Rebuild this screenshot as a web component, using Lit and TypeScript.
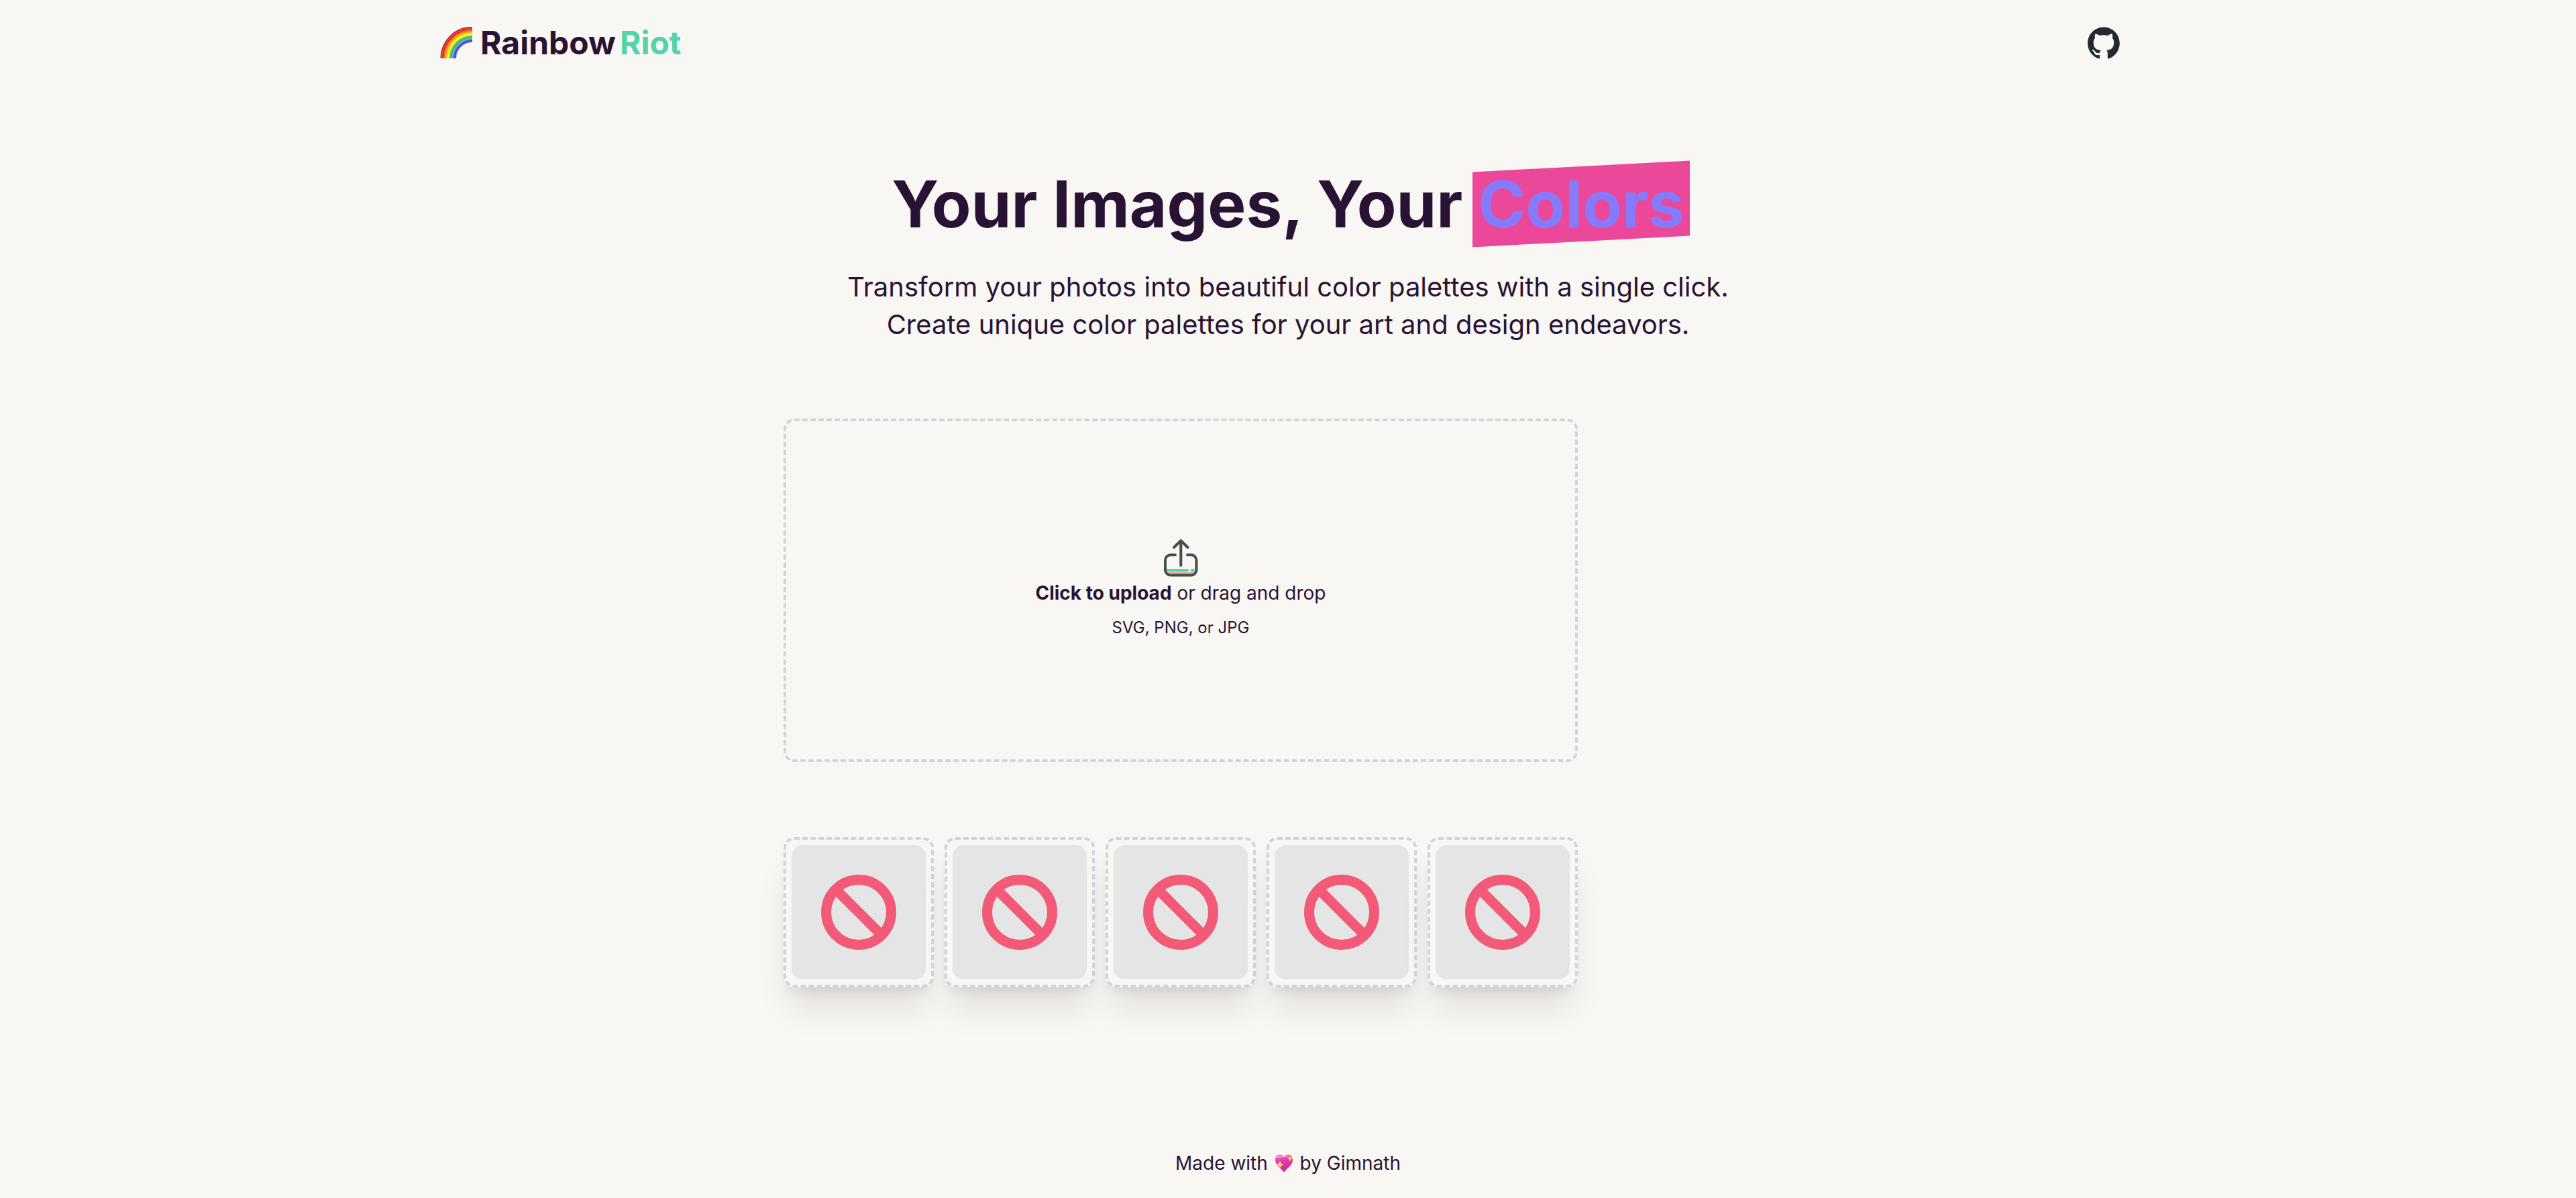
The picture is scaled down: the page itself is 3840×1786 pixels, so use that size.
import { LitElement, html, css, svg } from "lit";
import { customElement, property, state } from "lit/decorators.js";

@customElement("rainbow-mark")
class RainbowMark extends LitElement {
  static styles = css`
    :host {
      display: block;
      width: 48px;
      height: 48px;
    }
    .art {
      display: block;
      width: 100%;
      height: 100%;
    }
  `;

  // Outer radius and colour of each band, from the outside in.
  private bands: [number, string][] = [
    [47.5, "#c8142a"],
    [46, "#e0565e"],
    [44.5, "#d3221c"],
    [43, "#f2701b"],
    [41, "#fa9c12"],
    [39, "#fdc81a"],
    [37.5, "#fff05e"],
    [35.5, "#cdea3c"],
    [34, "#6fd02c"],
    [32, "#3fb53a"],
    [30.5, "#5ab8ee"],
    [28.5, "#3f78ee"],
    [27, "#5430d4"],
    [25.5, "#8a58ee"],
  ];

  render() {
    return html`<svg class="art" viewBox="0 0 48 48" role="img" aria-label="Rainbow">
      ${this.bands.map(
        ([r, color]) => svg`<path d="M${48 - r} 47A${r} ${r} 0 0 1 48 ${47 - r}V47Z" fill=${color} />`
      )}
      <path d="M24 47A24 24 0 0 1 48 23V48H24Z" fill="#f9f7f3" />
    </svg>`;
  }
}

@customElement("heart-mark")
class HeartMark extends LitElement {
  static styles = css`
    :host {
      display: inline-block;
      width: 28px;
      height: 28px;
      margin: 0 2px;
      vertical-align: -4px;
    }
    .art {
      display: block;
      width: 100%;
      height: 100%;
    }
  `;

  render() {
    return html`<svg class="art" viewBox="0 0 28 28" role="img" aria-label="Sparkling heart">
      <defs>
        <linearGradient id="body" x1="0" y1="0" x2="0.3" y2="1">
          <stop offset="0" stop-color="#ee6cca" />
          <stop offset="0.4" stop-color="#e43cb4" />
          <stop offset="1" stop-color="#d8249e" />
        </linearGradient>
      </defs>
      <path
        d="M14 27.500C10 22 1 17.500 1 9C1 4.500 4 1.500 7.800 1.500C10.700 1.500 13 3 14 5.300C15 3 17.300 1.500 20.200 1.500C24 1.500 27 4.500 27 9C27 17.500 18 22 14 27.500Z"
        fill="url(#body)"
      />
      <path
        d="M2.500 7.500C3 4.500 5.200 2.800 7.800 2.800C10.300 2.800 12 4 12.800 6C10 5.200 5 5.500 2.500 7.500ZM15.200 6C16 4 17.800 2.800 20 2.800C21 2.800 22 3.100 22.800 3.600C20.500 4.500 18 5.300 15.200 6Z"
        fill="#f7a6dd"
      />
      <path d="M23 2.500L24.300 5.700L27.500 7L24.300 8.300L23 11.500L21.700 8.300L18.500 7L21.700 5.700Z" fill="#fdd94a" />
      <path d="M8 10.500L9.600 14.600L13.500 16.300L9.600 18L8 22L6.400 18L2.300 16.300L6.400 14.600Z" fill="#fde05a" />
    </svg>`;
  }
}

@customElement("site-header")
class SiteHeader extends LitElement {
  static styles = css`
    :host {
      display: block;
    }
    .bar {
      display: flex;
      align-items: center;
      justify-content: space-between;
      box-sizing: border-box;
      max-width: 2560px;
      height: 128px;
      margin: 0 auto;
      padding: 0 40px 0 16px;
    }
    .brand {
      display: flex;
      align-items: center;
      gap: 12px;
      color: inherit;
      font-size: 48px;
      font-weight: 700;
      line-height: 64px;
      text-decoration: none;
    }
    .name {
      display: flex;
      gap: 6px;
    }
    .accent {
      color: #54d3a8;
    }
    .github {
      display: block;
      color: #24292f;
    }
    .mark {
      display: block;
      width: 48px;
      height: 48px;
    }
  `;

  render() {
    return html`<header class="bar">
      <a class="brand" href="/">
        <rainbow-mark></rainbow-mark>
        <span class="name"><span>Rainbow</span> <span class="accent">Riot</span></span>
      </a>
      <a class="github" href="https://github.com" aria-label="GitHub">
        <svg class="mark" viewBox="0 0 98 96" aria-hidden="true">
          <path
            fill="currentColor"
            fill-rule="evenodd"
            clip-rule="evenodd"
            d="M48.854 0C21.839 0 0 22 0 49.217c0 21.756 13.993 40.172 33.405 46.690 2.427.490 3.316-1.059 3.316-2.362 0-1.141-.080-5.052-.080-9.127-13.590 2.934-16.420-5.867-16.420-5.867-2.184-5.704-5.420-7.170-5.420-7.170-4.448-3.015.324-3.015.324-3.015 4.934.326 7.523 5.052 7.523 5.052 4.367 7.496 11.404 5.378 14.235 4.074.404-3.178 1.699-5.378 3.074-6.600-10.839-1.141-22.243-5.378-22.243-24.283 0-5.378 1.940-9.778 5.014-13.200-.485-1.222-2.184-6.275.486-13.038 0 0 4.125-1.304 13.426 5.052a46.970 46.970 0 0 1 12.214-1.630c4.125 0 8.330.571 12.213 1.630 9.302-6.356 13.427-5.052 13.427-5.052 2.670 6.763.970 11.816.485 13.038 3.155 3.422 5.015 7.822 5.015 13.200 0 18.905-11.404 23.060-22.324 24.283 1.780 1.548 3.316 4.481 3.316 9.126 0 6.600-.080 11.897-.080 13.526 0 1.304.890 2.853 3.316 2.364 19.412-6.520 33.405-24.935 33.405-46.691C97.707 22 75.788 0 48.854 0z"
          />
        </svg>
      </a>
    </header>`;
  }
}

@customElement("page-hero")
class PageHero extends LitElement {
  static styles = css`
    :host {
      display: block;
      text-align: center;
    }
    .title {
      margin: 0;
      font-size: 96px;
      font-weight: 700;
      line-height: 96px;
    }
    .highlight {
      position: relative;
      display: inline-block;
      color: #857bff;
    }
    .highlight::before {
      content: "";
      position: absolute;
      inset: -8px;
      background: #ec4899;
      transform: skewY(-3deg);
    }
    .word {
      position: relative;
    }
    .lead {
      margin: 48px 0 0;
      font-size: 40px;
      line-height: 56px;
    }
    .line {
      display: block;
    }
  `;

  render() {
    return html`<section>
      <h1 class="title">
        Your Images, Your
        <span class="highlight"><span class="word">Colors</span></span>
      </h1>
      <p class="lead">
        <span class="line">Transform your photos into beautiful color palettes with a single click.</span>
        <span class="line">Create unique color palettes for your art and design endeavors.</span>
      </p>
    </section>`;
  }
}

@customElement("image-drop")
class ImageDrop extends LitElement {
  static styles = css`
    :host {
      display: block;
    }
    .zone {
      position: relative;
      display: flex;
      flex-direction: column;
      align-items: center;
      justify-content: center;
      box-sizing: border-box;
      min-height: 512px;
      padding: 40px 16px 48px;
      border: 4px dashed #d1d5db;
      border-radius: 16px;
      text-align: center;
      cursor: pointer;
    }
    .picker {
      position: absolute;
      inset: 0;
      width: 100%;
      height: 100%;
      opacity: 0;
      cursor: pointer;
    }
    .icon {
      display: block;
      width: 64px;
      height: 64px;
    }
    .prompt {
      margin-bottom: 16px;
      font-size: 28px;
      line-height: 40px;
    }
    .strong {
      font-weight: 700;
    }
    .formats {
      font-size: 24px;
      line-height: 32px;
    }
  `;

  render() {
    return html`<label class="zone" for="image">
      <svg class="icon" viewBox="0 0 64 64" fill="none" stroke-linecap="round" stroke-linejoin="round" aria-hidden="true">
        <path d="M13 53H52V57H13Z" fill="#e0b59e" />
        <path d="M12 50.300H42M48.500 50.300H51" stroke="#54cfa0" stroke-width="4" />
        <path
          d="M24 27.300H17A8 8 0 0 0 9 35.300V49.500A8 8 0 0 0 17 57.500H47.500A8 8 0 0 0 55.500 49.500V35.300A8 8 0 0 0 47.500 27.300H42M32.300 6V43M22 16L32.300 6L42.500 16"
          stroke="#4b4b4f"
          stroke-width="4"
        />
      </svg>
      <span class="prompt"><span class="strong">Click to upload</span> or drag and drop</span>
      <span class="formats">SVG, PNG, or JPG</span>
      <input class="picker" id="image" type="file" accept=".svg,.png,.jpg,.jpeg" />
    </label>`;
  }
}

@customElement("color-swatch")
class ColorSwatch extends LitElement {
  @property() color = "";

  static styles = css`
    :host {
      display: block;
    }
    .frame {
      box-sizing: border-box;
      aspect-ratio: 1;
      padding: 8px;
      border: 4px dashed #d1d5db;
      border-radius: 16px;
      background: #f9f7f3;
      box-shadow: 0 40px 50px -10px rgba(24, 8, 16, 0.1), 0 16px 20px -12px rgba(24, 8, 16, 0.1);
    }
    .fill {
      display: grid;
      place-items: center;
      height: 100%;
      border-radius: 16px;
      background: #e5e5e5;
    }
    .none {
      display: block;
      width: 56%;
    }
  `;

  render() {
    return html`<div class="frame">
      <div class="fill">
        <svg class="none" viewBox="0 0 112 112" fill="none" stroke="#f25a78" stroke-width="15" role="img" aria-label="No color">
          <circle cx="56" cy="56" r="48.500" />
          <path d="M22 22L90 90" />
        </svg>
      </div>
    </div>`;
  }
}

@customElement("app-root")
class AppRoot extends LitElement {
  @state() private colors: string[] = ["", "", "", "", ""];

  static styles = css`
    :host {
      display: flex;
      flex-direction: column;
      min-height: 100vh;
      background: #f9f7f3;
      color: #291334;
      font-family: Inter, "Liberation Sans", sans-serif;
    }
    .main {
      flex: 1;
      box-sizing: border-box;
      width: 100%;
      max-width: 1504px;
      margin: 0 auto;
      padding-top: 128px;
    }
    .tool {
      display: flex;
      flex-direction: column;
      gap: 112px;
      max-width: 1184px;
      margin-top: 112px;
    }
    .palette {
      display: grid;
      grid-template-columns: repeat(5, 1fr);
      gap: 16px;
      margin: 0;
      padding: 0;
      list-style: none;
    }
    .footer {
      padding: 32px;
      font-size: 28px;
      line-height: 40px;
      text-align: center;
    }
  `;

  render() {
    return html`
      <site-header></site-header>
      <main class="main">
        <page-hero></page-hero>
        <div class="tool">
          <image-drop></image-drop>
          <ul class="palette">
            ${this.colors.map((color) => html`<li><color-swatch .color=${color}></color-swatch></li>`)}
          </ul>
        </div>
      </main>
      <footer class="footer">Made with <heart-mark></heart-mark> by Gimnath</footer>
    `;
  }
}
